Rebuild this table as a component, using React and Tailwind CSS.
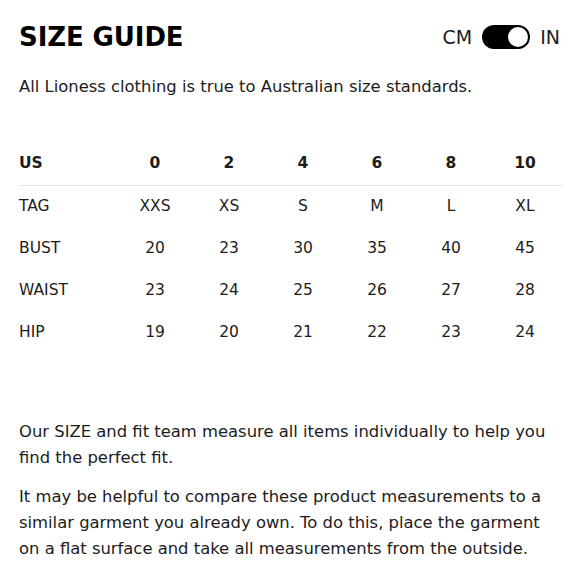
import React, { useState } from 'react';

const cols = ['0', '2', '4', '6', '8', '10'];
const rows = [
  { label: 'TAG', values: ['XXS', 'XS', 'S', 'M', 'L', 'XL'] },
  { label: 'BUST', values: ['20', '23', '30', '35', '40', '45'] },
  { label: 'WAIST', values: ['23', '24', '25', '26', '27', '28'] },
  { label: 'HIP', values: ['19', '20', '21', '22', '23', '24'] },
];

const App = () => {
  const [inches, setInches] = useState(true);

  return (
    <div className="w-[580px] h-[580px] bg-white text-[#1c1c1c] px-[19px] pt-[22px] font-['DejaVu_Sans',sans-serif]">
      {/* Header */}
      <div className="flex items-center justify-between h-[30px]">
        <h1 className="text-[26px] font-bold tracking-[-0.1px] text-black leading-none">SIZE GUIDE</h1>
        <div className="flex items-center gap-[10px] pr-[1px]">
          <span className="text-[19px] leading-none">CM</span>
          <button
            onClick={() => setInches(!inches)}
            className="relative w-[48px] h-[24px] rounded-full bg-black"
          >
            <span className={`absolute top-[2px] w-[20px] h-[20px] rounded-full bg-white ${inches ? 'right-[2px]' : 'left-[2px]'}`} />
          </button>
          <span className="text-[19px] leading-none">IN</span>
        </div>
      </div>

      <p className="mt-[25px] text-[16.4px] leading-[20px]">All Lioness clothing is true to Australian size standards.</p>

      {/* Table */}
      <div className="mt-[48px] w-[543px] text-[15.5px]">
        <div className="grid grid-cols-[99px_repeat(6,74px)] items-center h-[41px] border-b border-[#e6e6e6] font-bold pb-[2px]">
          <span>US</span>
          {cols.map((c) => (
            <span key={c} className="text-center">{c}</span>
          ))}
        </div>
        {rows.map((r) => (
          <div key={r.label} className="grid grid-cols-[99px_repeat(6,74px)] items-center h-[42px]">
            <span>{r.label}</span>
            {r.values.map((v, i) => (
              <span key={i} className="text-center">{v}</span>
            ))}
          </div>
        ))}
      </div>

      {/* Notes */}
      <div className="mt-[65px] w-[540px] text-[16.4px] leading-[26px]">
        <p>Our SIZE and fit team measure all items individually to help you find the perfect fit.</p>
        <p className="mt-[13px]">It may be helpful to compare these product measurements to a similar garment you already own. To do this, place the garment on a flat surface and take all measurements from the outside.</p>
      </div>
    </div>
  );
};

export default App;
